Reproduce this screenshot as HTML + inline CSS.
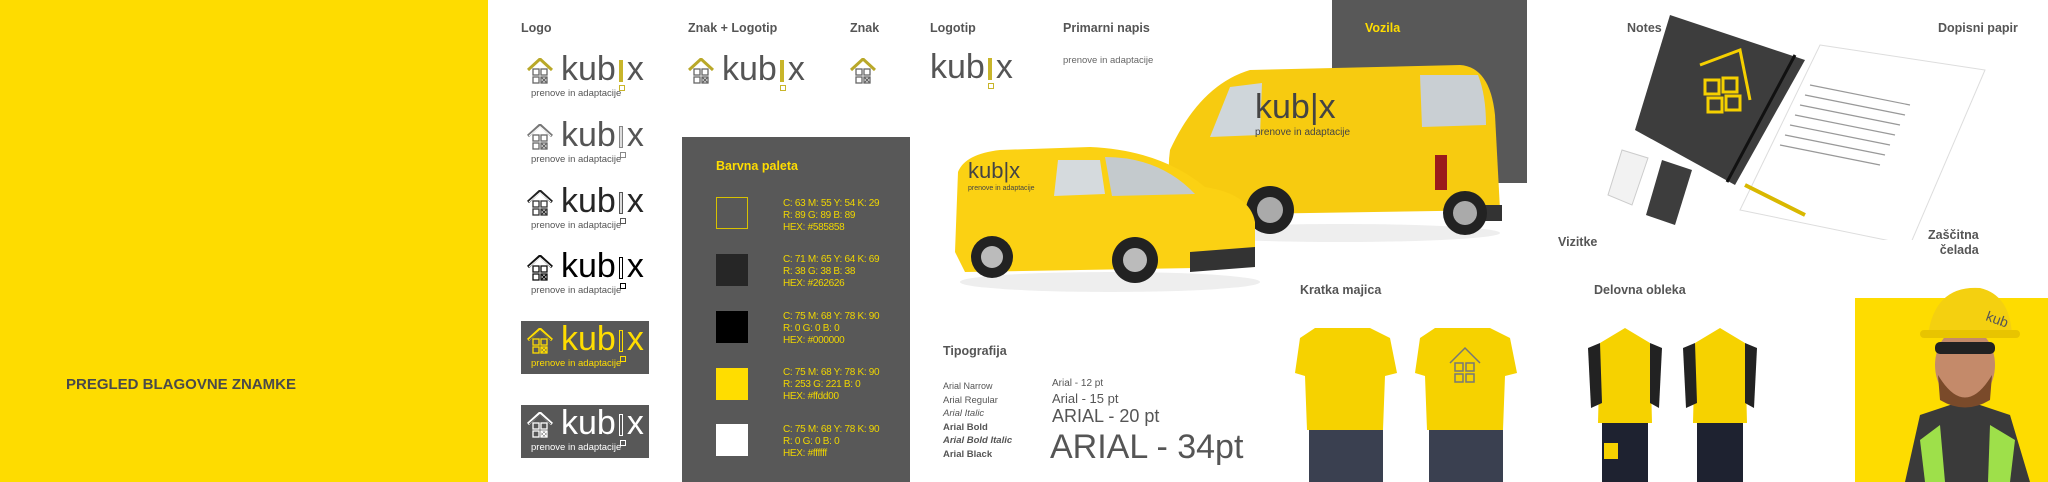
<!DOCTYPE html>
<html><head><meta charset="utf-8"><style>
*{margin:0;padding:0;box-sizing:border-box}
body{width:2048px;height:482px;position:relative;overflow:hidden;background:#fff;font-family:"Liberation Sans",Arial,sans-serif;color:#555}
.a{position:absolute}
.h{position:absolute;font-weight:bold;font-size:12.5px;color:#555;white-space:nowrap}
.logo{position:absolute;width:130px;height:44px}
.logo svg{position:absolute;left:0;top:2px}
.logo .t{position:absolute;left:34px;top:-4px;font-size:34px;line-height:34px;letter-spacing:0px;white-space:nowrap}
.logo .s{position:absolute;left:4px;top:32px;font-size:9.5px;white-space:nowrap}
.bar{display:inline-block;width:4px;height:22px;margin:0 4px 0 3px;vertical-align:-2px;position:relative}
.bar:after{content:"";position:absolute;left:0;top:25px;width:4px;height:4px;border:1px solid currentColor}
.pal{position:absolute;font-size:10px;line-height:12px;color:#f0d600;white-space:nowrap;letter-spacing:-0.3px}
.sw{position:absolute;width:32px;height:32px}
</style></head><body>
<div class="a" style="left:0;top:0;width:488px;height:482px;background:#fedc00"></div>
<div class="h" style="left:66px;top:376px;font-size:15px;color:#4a4a4a">PREGLED BLAGOVNE ZNAMKE</div>

<div class="h" style="left:521px;top:21px">Logo</div>
<div class="h" style="left:688px;top:21px">Znak + Logotip</div>
<div class="h" style="left:850px;top:21px">Znak</div>
<div class="h" style="left:930px;top:21px">Logotip</div>
<div class="h" style="left:1063px;top:21px">Primarni napis</div>
<div class="a" style="left:1063px;top:55px;font-size:9.5px;color:#666">prenove in adaptacije</div>

<div class="logo" style="left:527px;top:56px">
<svg width="26" height="28" viewBox="0 0 26 28"><path d="M1 12L13 1L25 12" fill="none" stroke="#b9a829" stroke-width="3"/><g fill="none" stroke="#666" stroke-width="1.3"><rect x="6" y="11" width="6" height="6"/><rect x="14" y="11" width="6" height="6"/><rect x="6" y="19" width="6" height="6"/><rect x="14" y="19" width="6" height="6"/><path d="M14 19l6 6M20 19l-6 6"/></g></svg>
<div class="t" style="color:#555">kub<span class="bar" style="background:#c8b52a;color:#c8b52a"></span>x</div>
<div class="s">prenove in adaptacije</div></div>
<div class="logo" style="left:527px;top:122px">
<svg width="26" height="28" viewBox="0 0 26 28"><path d="M1 12L13 1L25 12" fill="none" stroke="#777" stroke-width="3"/><path d="M2 12L13 2.5L24 12" fill="none" stroke="#fff" stroke-width="1"/><g fill="none" stroke="#666" stroke-width="1.3"><rect x="6" y="11" width="6" height="6"/><rect x="14" y="11" width="6" height="6"/><rect x="6" y="19" width="6" height="6"/><rect x="14" y="19" width="6" height="6"/><path d="M14 19l6 6M20 19l-6 6"/></g></svg>
<div class="t" style="color:#555">kub<span class="bar" style="background:#ddd;border:1px solid #888;color:#888"></span>x</div>
<div class="s">prenove in adaptacije</div></div>
<div class="logo" style="left:527px;top:188px">
<svg width="26" height="28" viewBox="0 0 26 28"><path d="M1 12L13 1L25 12" fill="none" stroke="#222" stroke-width="3"/><path d="M2 12L13 2.5L24 12" fill="none" stroke="#fff" stroke-width="1"/><g fill="none" stroke="#333" stroke-width="1.3"><rect x="6" y="11" width="6" height="6"/><rect x="14" y="11" width="6" height="6"/><rect x="6" y="19" width="6" height="6"/><rect x="14" y="19" width="6" height="6"/><path d="M14 19l6 6M20 19l-6 6"/></g></svg>
<div class="t" style="color:#262626">kub<span class="bar" style="background:#ddd;border:1px solid #555;color:#555"></span>x</div>
<div class="s">prenove in adaptacije</div></div>
<div class="logo" style="left:527px;top:253px">
<svg width="26" height="28" viewBox="0 0 26 28"><path d="M1 12L13 1L25 12" fill="none" stroke="#111" stroke-width="3"/><path d="M2 12L13 2.5L24 12" fill="none" stroke="#fff" stroke-width="1"/><g fill="none" stroke="#111" stroke-width="1.3"><rect x="6" y="11" width="6" height="6"/><rect x="14" y="11" width="6" height="6"/><rect x="6" y="19" width="6" height="6"/><rect x="14" y="19" width="6" height="6"/><path d="M14 19l6 6M20 19l-6 6"/></g></svg>
<div class="t" style="color:#000">kub<span class="bar" style="background:#fff;border:1px solid #000;color:#000"></span>x</div>
<div class="s">prenove in adaptacije</div></div>
<div class="a" style="left:521px;top:321px;width:128px;height:53px;background:#585858"></div>
<div class="logo" style="left:527px;top:326px">
<svg width="26" height="28" viewBox="0 0 26 28"><path d="M1 12L13 1L25 12" fill="none" stroke="#ffdd00" stroke-width="3"/><path d="M2 12L13 2.5L24 12" fill="none" stroke="#585858" stroke-width="1"/><g fill="none" stroke="#ffdd00" stroke-width="1.3"><rect x="6" y="11" width="6" height="6"/><rect x="14" y="11" width="6" height="6"/><rect x="6" y="19" width="6" height="6"/><rect x="14" y="19" width="6" height="6"/><path d="M14 19l6 6M20 19l-6 6"/></g></svg>
<div class="t" style="color:#ffdd00">kub<span class="bar" style="background:#585858;border:1px solid #ffdd00;color:#ffdd00"></span>x</div>
<div class="s" style="color:#ffdd00">prenove in adaptacije</div></div>
<div class="a" style="left:521px;top:405px;width:128px;height:53px;background:#585858"></div>
<div class="logo" style="left:527px;top:410px">
<svg width="26" height="28" viewBox="0 0 26 28"><path d="M1 12L13 1L25 12" fill="none" stroke="#fff" stroke-width="3"/><path d="M2 12L13 2.5L24 12" fill="none" stroke="#585858" stroke-width="1"/><g fill="none" stroke="#fff" stroke-width="1.3"><rect x="6" y="11" width="6" height="6"/><rect x="14" y="11" width="6" height="6"/><rect x="6" y="19" width="6" height="6"/><rect x="14" y="19" width="6" height="6"/><path d="M14 19l6 6M20 19l-6 6"/></g></svg>
<div class="t" style="color:#fff">kub<span class="bar" style="background:#585858;border:1px solid #fff;color:#fff"></span>x</div>
<div class="s" style="color:#fff">prenove in adaptacije</div></div>

<div class="logo" style="left:688px;top:56px">
<svg width="26" height="28" viewBox="0 0 26 28"><path d="M1 12L13 1L25 12" fill="none" stroke="#b9a829" stroke-width="3"/><g fill="none" stroke="#666" stroke-width="1.3"><rect x="6" y="11" width="6" height="6"/><rect x="14" y="11" width="6" height="6"/><rect x="6" y="19" width="6" height="6"/><rect x="14" y="19" width="6" height="6"/><path d="M14 19l6 6M20 19l-6 6"/></g></svg>
<div class="t" style="color:#555">kub<span class="bar" style="background:#c8b52a;color:#c8b52a"></span>x</div></div>
<svg class="a" style="left:850px;top:58px" width="26" height="28" viewBox="0 0 26 28"><path d="M1 12L13 1L25 12" fill="none" stroke="#b9a829" stroke-width="3"/><g fill="none" stroke="#666" stroke-width="1.3"><rect x="6" y="11" width="6" height="6"/><rect x="14" y="11" width="6" height="6"/><rect x="6" y="19" width="6" height="6"/><rect x="14" y="19" width="6" height="6"/><path d="M14 19l6 6M20 19l-6 6"/></g></svg>
<div class="logo" style="left:896px;top:54px"><div class="t" style="color:#555">kub<span class="bar" style="background:#c8b52a;color:#c8b52a"></span>x</div></div>

<div class="a" style="left:682px;top:137px;width:228px;height:345px;background:#585858"></div>
<div class="h" style="left:716px;top:159px;color:#ffdd00;font-size:12.5px">Barvna paleta</div>
<div class="sw" style="left:716px;top:197px;border:1px solid #d8c200"></div>
<div class="pal" style="left:783px;top:198px">C: 63 M: 55 Y: 54 K: 29<br>R: 89 G: 89 B: 89<br>HEX: #585858</div>
<div class="sw" style="left:716px;top:254px;background:#262626"></div>
<div class="pal" style="left:783px;top:254px">C: 71 M: 65 Y: 64 K: 69<br>R: 38 G: 38 B: 38<br>HEX: #262626</div>
<div class="sw" style="left:716px;top:311px;background:#000"></div>
<div class="pal" style="left:783px;top:311px">C: 75 M: 68 Y: 78 K: 90<br>R: 0 G: 0 B: 0<br>HEX: #000000</div>
<div class="sw" style="left:716px;top:368px;background:#ffdd00"></div>
<div class="pal" style="left:783px;top:367px">C: 75 M: 68 Y: 78 K: 90<br>R: 253 G: 221 B: 0<br>HEX: #ffdd00</div>
<div class="sw" style="left:716px;top:424px;background:#fff"></div>
<div class="pal" style="left:783px;top:424px">C: 75 M: 68 Y: 78 K: 90<br>R: 0 G: 0 B: 0<br>HEX: #ffffff</div>

<div class="h" style="left:943px;top:344px">Tipografija</div>
<div class="a" style="left:943px;top:380px;font-size:9.5px;line-height:13.5px;color:#555">
<div style="font-size:9px">Arial Narrow</div><div>Arial Regular</div><div style="font-style:italic">Arial Italic</div><div style="font-weight:bold">Arial Bold</div><div style="font-weight:bold;font-style:italic">Arial Bold Italic</div><div style="font-weight:900">Arial Black</div></div>
<div class="a" style="left:1052px;top:378px;font-size:10px;color:#555">Arial - 12 pt</div>
<div class="a" style="left:1052px;top:391px;font-size:13px;color:#555">Arial - 15 pt</div>
<div class="a" style="left:1052px;top:406px;font-size:18px;color:#555">ARIAL - 20 pt</div>
<div class="a" style="left:1050px;top:428px;font-size:34px;color:#555">ARIAL - 34pt</div>

<div class="a" style="left:1332px;top:0;width:195px;height:183px;background:#585858"></div>
<div class="h" style="left:1365px;top:21px;color:#ffdd00">Vozila</div>
<svg class="a" style="left:1160px;top:55px" width="345" height="190" viewBox="0 0 345 190">
<ellipse cx="180" cy="178" rx="160" ry="9" fill="#eee"/>
<path d="M10 95 Q40 30 90 15 L300 10 Q330 12 335 60 L340 155 L20 160 Q5 130 10 95Z" fill="#f7cb10"/>
<path d="M260 20 L318 20 Q326 40 326 70 L262 72Z" fill="#c9cfd3"/>
<path d="M70 32 L102 28 L100 80 L50 82Z" fill="#cfd6da"/>
<rect x="290" y="150" width="52" height="16" fill="#333"/>
<rect x="275" y="100" width="12" height="35" fill="#9b1b1b"/>
<circle cx="110" cy="155" r="24" fill="#222"/><circle cx="110" cy="155" r="13" fill="#aaa"/>
<circle cx="305" cy="158" r="22" fill="#222"/><circle cx="305" cy="158" r="12" fill="#aaa"/>
<text x="95" y="63" font-family="Liberation Sans" font-size="34" fill="#444">kub|x</text>
<text x="95" y="80" font-family="Liberation Sans" font-size="10" fill="#444">prenove in adaptacije</text>
</svg>
<svg class="a" style="left:950px;top:132px" width="310" height="165" viewBox="0 0 310 165">
<ellipse cx="160" cy="150" rx="150" ry="10" fill="#eee"/>
<path d="M5 120 L8 40 Q15 22 50 18 L140 15 Q210 18 255 55 Q300 62 305 90 L305 135 L15 140Z" fill="#fbd113"/>
<path d="M108 28 L150 28 L155 62 L104 64Z" fill="#d5dadd"/>
<path d="M155 25 Q210 25 245 62 L162 64Z" fill="#c4cacd"/>
<path d="M240 120 L305 115 L305 135 L240 140Z" fill="#333"/>
<circle cx="42" cy="125" r="21" fill="#222"/><circle cx="42" cy="125" r="11" fill="#bbb"/>
<circle cx="185" cy="128" r="23" fill="#222"/><circle cx="185" cy="128" r="12" fill="#bbb"/>
<text x="18" y="46" font-family="Liberation Sans" font-size="22" fill="#444">kub|x</text>
<text x="18" y="58" font-family="Liberation Sans" font-size="7" fill="#444">prenove in adaptacije</text>
</svg>

<div class="h" style="left:1627px;top:21px">Notes</div>
<div class="h" style="left:1938px;top:21px">Dopisni papir</div>
<svg class="a" style="left:1580px;top:10px" width="420" height="230" viewBox="0 0 420 230">
<polygon points="240,35 405,60 330,235 160,200" fill="#fff" stroke="#ddd"/>
<g stroke="#999" stroke-width="1.2"><line x1="230" y1="75" x2="330" y2="95"/><line x1="225" y1="85" x2="325" y2="105"/><line x1="220" y1="95" x2="320" y2="115"/><line x1="215" y1="105" x2="315" y2="125"/><line x1="210" y1="115" x2="310" y2="135"/><line x1="205" y1="125" x2="305" y2="145"/><line x1="200" y1="135" x2="300" y2="155"/></g>
<polygon points="90,5 225,50 155,175 55,120" fill="#3d3d3d"/>
<line x1="215" y1="45" x2="147" y2="172" stroke="#111" stroke-width="3"/>
<g fill="none" stroke="#f5d000" stroke-width="3"><path d="M120 55 L160 40 L170 90"/><rect x="125" y="70" width="14" height="14"/><rect x="143" y="68" width="14" height="14"/><rect x="128" y="88" width="14" height="14"/><rect x="146" y="86" width="14" height="14"/></g>
<polygon points="42,140 68,148 52,195 28,185" fill="#f2f2f2" stroke="#ccc"/>
<polygon points="82,150 112,160 95,215 66,205" fill="#3d3d3d"/>
<line x1="165" y1="175" x2="225" y2="205" stroke="#d9b800" stroke-width="4"/>
</svg>
<div class="h" style="left:1558px;top:235px">Vizitke</div>
<div class="h" style="left:1928px;top:228px;text-align:right;line-height:15px">Zaščitna<br>&nbsp;&nbsp;&nbsp;čelada</div>

<div class="h" style="left:1300px;top:283px">Kratka majica</div>
<div class="h" style="left:1594px;top:283px">Delovna obleka</div>
<svg class="a" style="left:1295px;top:318px" width="230" height="164" viewBox="0 0 230 164">
<path d="M20 10 L75 10 L95 20 L102 55 L90 58 L88 112 L12 112 L10 58 L0 55 L5 20Z" fill="#f6d200"/><rect x="14" y="112" width="74" height="52" fill="#3a4050"/>
<path d="M140 10 L195 10 L215 20 L222 55 L210 58 L208 112 L132 112 L130 58 L120 55 L125 20Z" fill="#f6d200"/><rect x="134" y="112" width="74" height="52" fill="#3a4050"/>
<g fill="none" stroke="#777" stroke-width="1.5"><path d="M155 45 L170 30 L185 45"/><rect x="160" y="45" width="8" height="8"/><rect x="171" y="45" width="8" height="8"/><rect x="160" y="56" width="8" height="8"/><rect x="171" y="56" width="8" height="8"/></g>
</svg>
<svg class="a" style="left:1585px;top:318px" width="190" height="164" viewBox="0 0 190 164">
<path d="M15 25 L40 10 L65 25 L67 105 L13 105Z" fill="#f6d200"/><path d="M3 30 L15 25 L17 85 L6 90Z" fill="#222"/><path d="M65 25 L77 30 L74 90 L65 85Z" fill="#222"/><rect x="17" y="105" width="46" height="59" fill="#1e2230"/><rect x="19" y="125" width="14" height="16" fill="#f6d200"/>
<path d="M110 25 L135 10 L160 25 L162 105 L108 105Z" fill="#f6d200"/><path d="M98 30 L110 25 L112 85 L101 90Z" fill="#222"/><path d="M160 25 L172 30 L169 90 L160 85Z" fill="#222"/><rect x="112" y="105" width="46" height="59" fill="#1e2230"/>
</svg>
<div class="a" style="left:1855px;top:298px;width:193px;height:184px;background:#fedc00"></div>
<svg class="a" style="left:1880px;top:280px" width="168" height="202" viewBox="0 0 168 202">
<path d="M25 202 L40 135 L85 120 L130 135 L150 202Z" fill="#3a3a3a"/>
<path d="M40 160 L60 145 L65 202 L45 202Z" fill="#9ee04a"/><path d="M110 145 L135 160 L130 202 L108 202Z" fill="#9ee04a"/>
<ellipse cx="85" cy="85" rx="30" ry="38" fill="#c48a6a"/>
<path d="M58 95 Q85 140 112 95 L110 120 Q85 135 60 120Z" fill="#7a4a2a"/>
<rect x="55" y="62" width="60" height="12" rx="5" fill="#222"/>
<path d="M48 55 Q55 5 100 8 Q130 15 132 55Z" fill="#f4d010"/><rect x="40" y="50" width="100" height="8" rx="4" fill="#e8c400"/>
<text x="105" y="40" font-family="Liberation Sans" font-size="14" fill="#555" transform="rotate(20 105 40)">kub</text>
</svg>
</body></html>
